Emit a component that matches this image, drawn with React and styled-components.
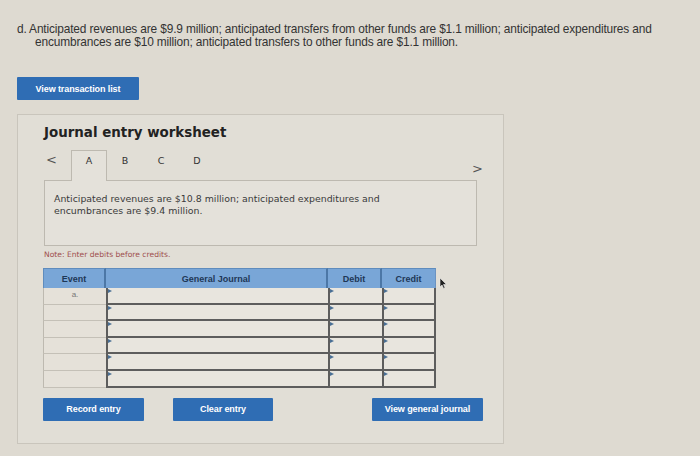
import styled, { createGlobalStyle } from 'styled-components';

// 저널 입력 워크시트 화면

const GlobalStyle = createGlobalStyle`
  html, body {
    margin: 0;
    background: #dedad1;
  }
  body {
    font-family: "Liberation Sans", Arial, sans-serif;
    color: #2b2b2b;
  }
`;

const Page = styled.div`
  position: relative;
  width: 700px;
  height: 456px;
  padding: 23px 0 0 17px;
  box-sizing: border-box;
  overflow: hidden;
`;

const Question = styled.p`
  margin: 0;
  width: 645px;
  padding-left: 18px;
  text-indent: -18px;
  font-size: 11.9px;
  line-height: 13px;
  letter-spacing: -0.15px;
  color: #333;
`;

const BlueButton = styled.button`
  display: flex;
  align-items: center;
  justify-content: center;
  width: ${p => p.$w}px;
  height: 23px;
  padding: 0;
  border: none;
  border-radius: 1px;
  background: #2f6db4;
  color: #fff;
  font-family: "Liberation Sans", Arial, sans-serif;
  font-weight: 700;
  font-size: 9px;
  letter-spacing: -0.1px;
`;

const TopButton = styled(BlueButton)`
  margin-top: 28px;
`;

const Panel = styled.section`
  margin-top: 14px;
  width: 487px;
  height: 330px;
  box-sizing: border-box;
  border: 1px solid #c9c5bc;
  background: #e1ded6;
  padding: 9px 0 0 26px;
`;

const Title = styled.h2`
  margin: 0;
  font-family: "DejaVu Sans", Verdana, sans-serif;
  font-weight: 700;
  font-size: 13.4px;
  line-height: 17px;
  color: #222;
`;

const TabBar = styled.div`
  display: flex;
  align-items: stretch;
  width: 433px;
  height: 30px;
  margin-top: 9px;
`;

const Arrow = styled.span`
  display: flex;
  align-items: ${p => (p.$right ? 'center' : 'flex-start')};
  justify-content: ${p => (p.$right ? 'flex-end' : 'flex-start')};
  width: ${p => (p.$right ? 'auto' : '27px')};
  flex: ${p => (p.$right ? 1 : 'none')};
  padding: ${p => (p.$right ? '6px 0 0 0' : '2px 0 0 2px')};
  margin-right: ${p => (p.$right ? '-6px' : '0')};
  box-sizing: border-box;
  color: #555;
  font-family: "DejaVu Sans", sans-serif;
  font-size: 13px;
`;

const Tab = styled.div`
  display: flex;
  align-items: flex-start;
  justify-content: center;
  width: 36px;
  box-sizing: border-box;
  padding-top: 4px;
  border: 1px solid ${p => (p.$active ? '#bdb9b0' : 'transparent')};
  border-bottom: none;
  background: ${p => (p.$active ? '#e4e1da' : 'transparent')};
  margin-bottom: -1px;
  position: relative;
  z-index: 1;
  font-family: "DejaVu Sans", Verdana, sans-serif;
  font-size: 9.5px;
  color: #333;
`;

const Prompt = styled.div`
  width: 433px;
  height: 66px;
  box-sizing: border-box;
  border: 1px solid #bdb9b0;
  background: #e4e1da;
  padding: 12px 80px 0 9px;
  font-family: "DejaVu Sans", Verdana, sans-serif;
  font-size: 9.4px;
  line-height: 12px;
  color: #3a3a3a;
`;

const Note = styled.div`
  margin-top: 4px;
  font-family: "DejaVu Sans", Verdana, sans-serif;
  font-size: 7.6px;
  color: #a0504e;
`;

const Grid = styled.div`
  position: relative;
  display: grid;
  grid-template-columns: 63px 222px 54px 54px;
  grid-template-rows: 20px repeat(6, 16.6px);
  width: 393px;
  margin: 9px 0 0 -1px;
`;

const Head = styled.div`
  display: flex;
  align-items: center;
  justify-content: center;
  background: #79a6d7;
  border-right: 2px solid #4c77a6;
  border-top: 1px solid #5f8cbd;
  font-weight: 700;
  font-size: 9px;
  color: #1e3756;
  &:first-child {
    border-left: 1px solid #5f8cbd;
  }
  &:nth-child(4) {
    border-right: 1px solid #6b93c2;
  }
`;

const EventCell = styled.div`
  display: flex;
  align-items: flex-start;
  justify-content: center;
  padding-top: 2px;
  box-sizing: border-box;
  background: #e5e1d9;
  border-left: 1px solid #bdb9b0;
  border-bottom: 1px solid #c4c0b7;
  font-size: 8px;
  color: #777;
`;

const Input = styled.div`
  position: relative;
  background: #e8e5de;
  border-left: 2px solid #5d5d5d;
  border-bottom: 2px solid #5d5d5d;
  &:nth-child(4n) {
    border-right: 2px solid #5d5d5d;
  }
  &::before {
    content: '';
    position: absolute;
    left: 0;
    top: 1px;
    border-left: 4px solid #4a6f95;
    border-top: 2px solid transparent;
    border-bottom: 2px solid transparent;
  }
`;

const Buttons = styled.div`
  display: flex;
  align-items: flex-start;
  width: 440px;
  margin: 10px 0 0 -1px;
  gap: 29px;
`;

const Spacer = styled.div`
  flex: 1;
`;

const Pointer = styled.svg`
  position: absolute;
  left: 439px;
  top: 278px;
`;

const rows = ['a.', '', '', '', '', ''];

export default function App() {
  return (
    <Page>
      <GlobalStyle />
      <Question>
        d. Anticipated revenues are $9.9 million; anticipated transfers from other funds are $1.1 million; anticipated expenditures and
        encumbrances are $10 million; anticipated transfers to other funds are $1.1 million.
      </Question>

      <TopButton $w={122}>View transaction list</TopButton>

      <Panel>
        <Title>Journal entry worksheet</Title>

        <TabBar>
          <Arrow>&lt;</Arrow>
          <Tab $active>A</Tab>
          <Tab>B</Tab>
          <Tab>C</Tab>
          <Tab>D</Tab>
          <Arrow $right>&gt;</Arrow>
        </TabBar>

        <Prompt>
          Anticipated revenues are $10.8 million; anticipated expenditures and encumbrances are $9.4 million.
        </Prompt>

        <Note>Note: Enter debits before credits.</Note>

        <Grid>
          <Head>Event</Head>
          <Head>General Journal</Head>
          <Head>Debit</Head>
          <Head>Credit</Head>
          {rows.map((ev, i) => [
            <EventCell key={`e${i}`}>{ev}</EventCell>,
            <Input key={`j${i}`} />,
            <Input key={`d${i}`} />,
            <Input key={`c${i}`} />,
          ])}
        </Grid>

        <Buttons>
          <BlueButton $w={101}>Record entry</BlueButton>
          <BlueButton $w={100}>Clear entry</BlueButton>
          <Spacer />
          <BlueButton $w={111}>View general journal</BlueButton>
        </Buttons>
      </Panel>

      <Pointer width="8" height="11" viewBox="0 0 8 11">
        <path d="M1 0 L1 9 L3 7 L4.6 10.5 L6 9.8 L4.5 6.5 L7.5 6.5 Z" fill="#222" stroke="#eee" strokeWidth="0.6" />
      </Pointer>
    </Page>
  );
}
